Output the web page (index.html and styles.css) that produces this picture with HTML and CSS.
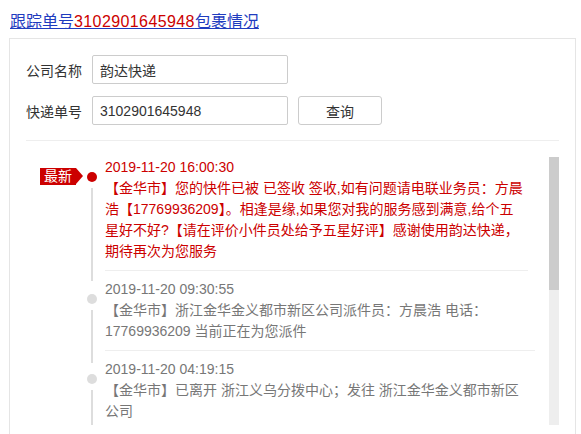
FILE: index.html
```html
<!DOCTYPE html>
<html lang="zh-CN">
<head>
<meta charset="utf-8">
<title>跟踪单号</title>
<link rel="stylesheet" href="styles.css">
</head>
<body>
<h1 class="title"><a href="#" class="title-link">跟踪单号<span class="num">3102901645948</span>包裹情况</a></h1>
<div class="panel">
  <form class="form">
    <div class="row">
      <label class="label">公司名称</label>
      <input class="input" type="text" value="韵达快递">
    </div>
    <div class="row">
      <label class="label">快递单号</label>
      <input class="input" type="text" value="3102901645948">
      <button class="btn" type="button">查询</button>
    </div>
  </form>
  <div class="sep"></div>
  <div class="scroller">
    <div class="list">
      <div class="item item-new">
        <div class="mark">
          <div class="mark-head"><span class="badge">最新</span><span class="dot"></span></div>
        </div>
        <div class="content">
          <div class="date">2019-11-20 16:00:30</div>
          <div class="text">【金华市】您的快件已被 已签收 签收,如有问题请电联业务员：方晨<br>浩【17769936209】。相逢是缘,如果您对我的服务感到满意,给个五<br>星好不好?【请在评价小件员处给予五星好评】感谢使用韵达快递，<br>期待再次为您服务</div>
        </div>
      </div>
      <div class="item">
        <div class="mark">
          <div class="mark-head"><span class="dot"></span></div>
        </div>
        <div class="content">
          <div class="date">2019-11-20 09:30:55</div>
          <div class="text">【金华市】浙江金华金义都市新区公司派件员：方晨浩 电话：<br>17769936209 当前正在为您派件</div>
        </div>
      </div>
      <div class="item">
        <div class="mark">
          <div class="mark-head"><span class="dot"></span></div>
        </div>
        <div class="content">
          <div class="date">2019-11-20 04:19:15</div>
          <div class="text">【金华市】已离开 浙江义乌分拨中心；发往 浙江金华金义都市新区<br>公司</div>
        </div>
      </div>
    </div>
    <div class="bar"><div class="thumb"></div></div>
  </div>
</div>
</body>
</html>
```

FILE: styles.css
```css
* { box-sizing: border-box; }
html, body { background: #fff; }
body {
  margin: 0;
  padding: 12px 5px 0 9px;
  font-family: "Liberation Sans", "Noto Sans CJK SC", sans-serif;
  color: #333;
  overflow: hidden;
}
.title {
  margin: 0 0 6px 1px;
  font-size: 16px;
  line-height: 20px;
  font-weight: normal;
}
.title-link {
  color: #1f3cbf;
  text-decoration: underline;
}
.num {
  color: #c00;
  letter-spacing: 0.4px;
}
.panel {
  width: 567px;
  height: 396px;
  border: 1px solid #e5e5e5;
  border-bottom: none;
  padding: 16px 16px 0 16px;
  overflow: hidden;
}
.form {
  display: flex;
  flex-direction: column;
  gap: 12px;
  margin: 0;
}
.row {
  display: flex;
  align-items: center;
  height: 29px;
}
.label {
  width: 66px;
  font-size: 14px;
  color: #333;
}
.input {
  width: 196px;
  height: 29px;
  border: 1px solid #ccc;
  border-radius: 2px;
  padding: 0 7px;
  font-family: "Liberation Sans", "Noto Sans CJK SC", sans-serif;
  font-size: 14px;
  color: #333;
  outline: none;
}
.btn {
  margin-left: 10px;
  width: 84px;
  height: 29px;
  background: #fff;
  border: 1px solid #ccc;
  border-radius: 3px;
  font-family: "Liberation Sans", "Noto Sans CJK SC", sans-serif;
  font-size: 14px;
  color: #333;
  padding: 0;
}
.sep {
  margin-top: 15px;
  height: 1px;
  background: #eee;
}
.scroller {
  margin-top: 16px;
  height: 268px;
  display: flex;
}
.list {
  width: 523px;
  height: 268px;
  overflow: hidden;
}
.bar {
  width: 10px;
  height: 268px;
  background: #eee;
}
.thumb {
  height: 133px;
  background: #ccc;
}
.item {
  display: flex;
  position: relative;
}
.mark {
  width: 79px;
  flex: none;
}
.mark-head {
  margin-top: 19px;
  height: 17px;
  display: flex;
  align-items: center;
  justify-content: flex-end;
  padding-right: 8px;
}
.item:first-child .mark-head { margin-top: 11px; }
.item::before {
  content: "";
  position: absolute;
  left: 65px;
  width: 2px;
  top: 39px;
  bottom: -12px;
  background: #ddd;
}
.item:first-child::before { top: 31px; bottom: -10px; }
.badge {
  position: relative;
  height: 17px;
  line-height: 17px;
  background: #c00;
  color: #fff;
  font-size: 14px;
  padding: 0 4px;
  margin-right: 11px;
}
.badge::after {
  content: "";
  position: absolute;
  right: -7px;
  top: 0;
  border-left: 7px solid #c00;
  border-top: 8.5px solid transparent;
  border-bottom: 8.5px solid transparent;
}
.dot {
  width: 10px;
  height: 10px;
  border-radius: 50%;
  background: #ddd;
}
.item-new .dot { background: #c00; }
.content {
  width: 430px;
  padding: 8px 0 8px;
  border-bottom: 1px solid #eee;
  font-size: 14px;
  line-height: 21px;
  color: #777;
}
.item:first-child .content { padding-top: 0; }
.item-new .content { color: #c00; width: 423px; }
.item-new .text { width: 430px; }
.date { white-space: nowrap; }
.text { white-space: nowrap; }
```
